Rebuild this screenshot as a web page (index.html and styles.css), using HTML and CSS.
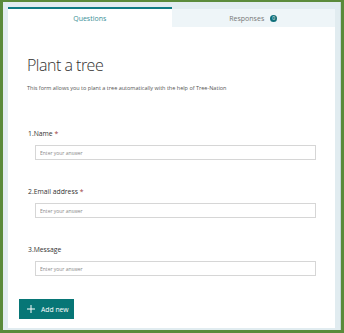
FILE: index.html
```html
<!DOCTYPE html>
<html lang="en">
<head>
    <meta charset="UTF-8">
    <meta name="viewport" content="width=device-width, initial-scale=1.0">
    <title>Plant a tree</title>
    <link rel="stylesheet" href="styles.css">
</head>
<body>
    <div class="frame">
        <div class="tabs">
            <div class="tab active">Questions</div>
            <div class="tab">Responses <span class="badge">0</span></div>
        </div>
        <div class="card">
            <h1>Plant a tree</h1>
            <p class="desc">This form allows you to plant a tree automatically with the help of Tree-Nation</p>

            <div class="question">
                <div class="label">1.Name <span class="req">*</span></div>
                <input type="text" placeholder="Enter your answer">
            </div>

            <div class="question">
                <div class="label">2.Email address <span class="req">*</span></div>
                <input type="text" placeholder="Enter your answer">
            </div>

            <div class="question">
                <div class="label">3.Message</div>
                <input type="text" placeholder="Enter your answer">
            </div>

            <button type="button" class="add-btn">
                <svg class="plus" width="8" height="8" viewBox="0 0 8 8">
                    <path d="M4 0v8M0 4h8" stroke="#fff" stroke-width="1" fill="none"/>
                </svg>
                Add new
            </button>
        </div>
    </div>
</body>
</html>
```

FILE: styles.css
```css
html, body {
    height: 100%;
}
body {
    font-family: "Open Sans", "Noto Sans", sans-serif;
    background-color: #5a8a3a;
    margin: 0;
    padding: 2px 3px 3px 3px;
    box-sizing: border-box;
}
.frame {
    background-color: #e1ecf0;
    border-right: 1px solid #c4d4da;
    padding: 5px 5px 2px 5px;
    height: 100%;
    box-sizing: border-box;
    display: flex;
    flex-direction: column;
}
.tabs {
    display: grid;
    grid-template-columns: 1fr 1fr;
    height: 20px;
}
.tab {
    font-size: 7px;
    color: #777;
    display: flex;
    justify-content: center;
    align-items: center;
    gap: 6px;
    background-color: #eef5f8;
    border-top: 2px solid #e1ecf0;
}
.tab.active {
    background-color: #fff;
    color: #3c8f98;
    border-top-color: #0f7c84;
}
.badge {
    width: 7px;
    height: 7px;
    border-radius: 50%;
    background-color: #0f6f7a;
    color: #fff;
    font-size: 5px;
    display: inline-flex;
    justify-content: center;
    align-items: center;
}
.card {
    flex: 1;
    background-color: #fff;
    padding: 0 19px 0 11px;
}
h1 {
    font-weight: 300;
    font-size: 16px;
    letter-spacing: -0.5px;
    line-height: 24px;
    color: #323130;
    margin: 26px 0 0 8px;
}
.desc {
    font-size: 5.5px;
    line-height: 10px;
    color: #555;
    margin: 6px 0 0 8px;
}
.question {
    margin-top: 26px;
    padding-left: 9px;
}
.card .desc + .question {
    margin-top: 35px;
}
.label {
    font-size: 6.8px;
    line-height: 12px;
    color: #333;
}
.req {
    color: #9c3a3a;
}
input[type="text"] {
    display: block;
    height: 15px;
    box-sizing: border-box;
    margin: 5px 0 0 7px;
    width: calc(100% - 7px);
    border: 1px solid #d6d6d6;
    padding: 0 4px;
    font-family: inherit;
    font-size: 5px;
}
input::placeholder {
    color: #8a8a8a;
}
.add-btn {
    margin-top: 23px;
    background-color: #077676;
    color: #fff;
    border: none;
    height: 20px;
    width: 55px;
    padding: 0 0 0 8px;
    font-family: inherit;
    font-size: 6.8px;
    display: flex;
    align-items: center;
    cursor: pointer;
}
.plus {
    margin-right: 6px;
}
```
